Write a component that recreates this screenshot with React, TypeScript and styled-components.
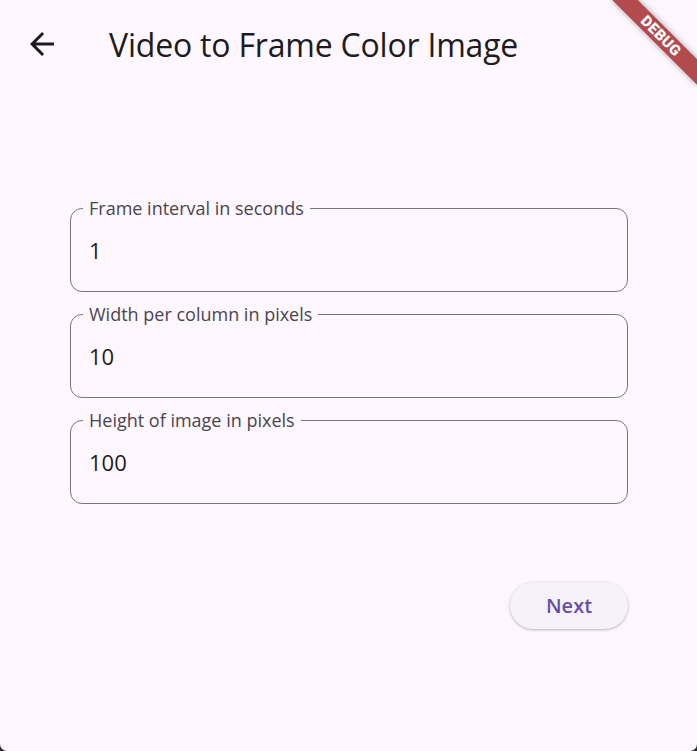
import { createGlobalStyle } from "styled-components"
import styled from "styled-components"

const GlobalStyle = createGlobalStyle`
    html, body {
        margin: 0;
        padding: 0;
        background: #2a2a2a;
    }
    * {
        box-sizing: border-box;
    }
`

const Screen = styled.div`
    position: relative;
    height: 751px;
    overflow: hidden;
    background: #fef7ff;
    border-radius: 0 0 7px 7px;
    font-family: "Open Sans", "Noto Sans", sans-serif;
    color: #1d1b20;
`

const AppBar = styled.header`
    display: flex;
    align-items: center;
    height: 88px;
    padding-left: 24px;
`

const BackButton = styled.button`
    display: flex;
    align-items: center;
    justify-content: center;
    width: 36px;
    height: 36px;
    padding: 0;
    border: none;
    background: transparent;
    color: #1d1b20;
    cursor: pointer;
`

const Title = styled.h1`
    margin: 0 0 0 49px;
    font-size: 32px;
    font-weight: 400;
    letter-spacing: -0.2px;
    color: #1d1b20;
`

const Form = styled.form`
    display: flex;
    flex-direction: column;
    gap: 10px;
    padding: 108px 69px 0 70px;
`

const Field = styled.fieldset`
    margin: 0;
    padding: 0 18px 11px;
    border: 1.3px solid #79747e;
    border-radius: 12px;
`

const Legend = styled.legend`
    margin-left: -6px;
    padding: 0 6px;
    font-size: 18px;
    line-height: 24px;
    color: #49454f;
`

const Input = styled.input`
    display: block;
    width: 100%;
    height: 60px;
    padding: 0;
    border: none;
    outline: none;
    background: transparent;
    font-family: inherit;
    font-size: 22px;
    color: #1d1b20;
`

const Actions = styled.div`
    display: flex;
    justify-content: flex-end;
    padding: 78px 69px 0 70px;
`

const NextButton = styled.button`
    width: 118px;
    height: 47px;
    border: none;
    border-radius: 24px;
    background: #f7f2fa;
    color: #6750a4;
    font-family: "Open Sans", "Noto Sans", sans-serif;
    font-size: 20px;
    font-weight: 600;
    box-shadow: 0 1px 3px rgba(0, 0, 0, 0.28);
    cursor: pointer;
`

const DebugBanner = styled.div`
    position: absolute;
    top: 36px;
    left: 661px;
    width: 120px;
    height: 18px;
    transform: translate(-50%, -50%) rotate(45deg);
    background: #b24a4e;
    box-shadow: 0 0 6px rgba(0, 0, 0, 0.35);
    color: #fff;
    font-family: Roboto, "Liberation Sans", sans-serif;
    font-size: 15px;
    font-weight: 900;
    line-height: 18px;
    text-align: center;
    letter-spacing: 0.4px;
`

const fields = [
    { label: "Frame interval in seconds", value: "1" },
    { label: "Width per column in pixels", value: "10" },
    { label: "Height of image in pixels", value: "100" },
]

const App = () => {
    return (
        <Screen>
            <GlobalStyle />
            <AppBar>
                <BackButton aria-label="Back">
                    <svg width="36" height="36" viewBox="0 0 24 24" fill="currentColor">
                        <path d="M20 11H7.83l5.59-5.59L12 4l-8 8 8 8 1.41-1.41L7.83 13H20v-2z" />
                    </svg>
                </BackButton>
                <Title>Video to Frame Color Image</Title>
            </AppBar>
            <Form>
                {fields.map(f => (
                    <Field key={f.label}>
                        <Legend>{f.label}</Legend>
                        <Input defaultValue={f.value} />
                    </Field>
                ))}
            </Form>
            <Actions>
                <NextButton>Next</NextButton>
            </Actions>
            <DebugBanner>DEBUG</DebugBanner>
        </Screen>
    )
}

export default App
